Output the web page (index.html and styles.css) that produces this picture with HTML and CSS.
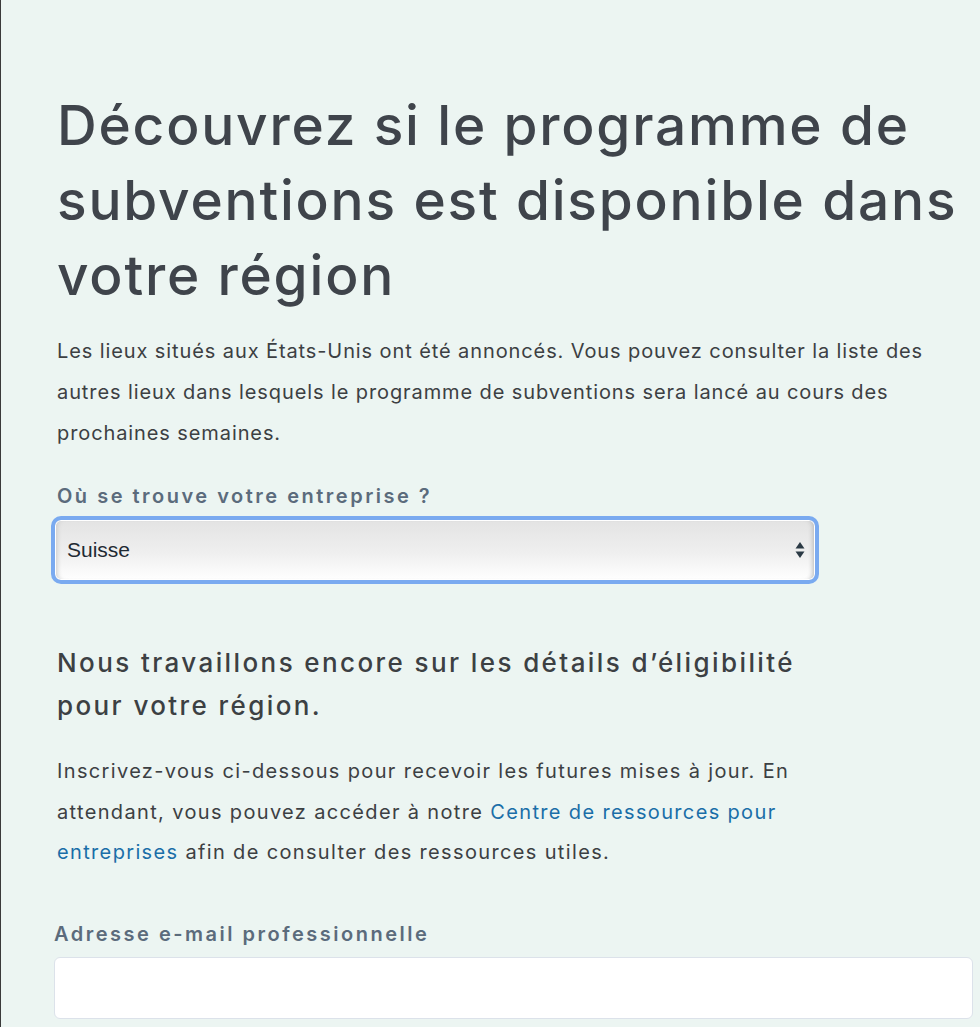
FILE: index.html
```html
<!DOCTYPE html>
<html lang="fr">
<head>
<meta charset="utf-8">
<link rel="stylesheet" href="styles.css">
</head>
<body>
<main class="page">
  <h1 class="title">Découvrez si le programme de subventions est disponible dans votre région</h1>
  <p class="intro">Les lieux situés aux États-Unis ont été annoncés. Vous pouvez consulter la liste des autres lieux dans lesquels le programme de subventions sera lancé au cours des prochaines semaines.</p>
  <label class="label" for="country">Où se trouve votre entreprise ?</label>
  <div class="select" id="country">
    <span class="select-value">Suisse</span>
    <svg class="select-arrows" width="10" height="18" viewBox="0 0 10 18"><path d="M5 1 L9.5 7.5 H0.5 Z" fill="#2b3a45"/><path d="M5 17 L9.5 10.5 H0.5 Z" fill="#2b3a45"/></svg>
  </div>
  <h2 class="subtitle">Nous travaillons encore sur les détails d’éligibilité pour votre région.</h2>
  <p class="body">Inscrivez-vous ci-dessous pour recevoir les futures mises à jour. En attendant, vous pouvez accéder à notre <a href="#" class="link">Centre de ressources pour entreprises</a> afin de consulter des ressources utiles.</p>
  <label class="label label-email" for="email">Adresse e-mail professionnelle</label>
  <div class="input" id="email"></div>
</main>
</body>
</html>
```

FILE: styles.css
```css
html, body {
  margin: 0;
  padding: 0;
}
body {
  background: #ecf5f2;
  border-left: 1px solid #3a3a3a;
  min-height: 1027px;
  box-sizing: border-box;
  font-family: "Inter", "Open Sans", sans-serif;
  color: #3c4043;
}
.page {
  padding: 88px 0 0 56px;
  display: flex;
  flex-direction: column;
  align-items: flex-start;
}
.title {
  margin: 0;
  font-weight: 500;
  font-size: 55px;
  line-height: 75px;
  letter-spacing: 1.8px;
  color: #3f444b;
}
.intro {
  margin: 18px 0 0;
  font-size: 20px;
  line-height: 41px;
  letter-spacing: 0.9px;
  max-width: 918px;
  color: #3c4043;
}
.label {
  margin-top: 29px;
  font-size: 20px;
  font-weight: 600;
  line-height: 26px;
  letter-spacing: 2.5px;
  color: #5b6b7c;
}
.select {
  margin: 7px 0 0 -6px;
  width: 768px;
  height: 68px;
  box-sizing: border-box;
  border: 4px solid #7aaaf0;
  border-radius: 10px;
  background: linear-gradient(#e3e3e3, #efefef 55%, #ffffff);
  box-shadow: inset 0 0 0 1px #fff, inset -5px 0 5px -3px #b5b5b5, inset 5px 0 5px -3px #c8c8c8;
  display: flex;
  align-items: center;
  justify-content: space-between;
  padding: 0 10px 0 12px;
}
.select-value {
  font-family: "Liberation Sans", Arial, sans-serif;
  font-size: 21px;
  color: #1f2a33;
}
.subtitle {
  margin: 57px 0 0;
  max-width: 760px;
  font-size: 26px;
  font-weight: 500;
  line-height: 43px;
  letter-spacing: 2.4px;
  color: #3c4043;
}
.body {
  margin: 24px 0 0;
  max-width: 760px;
  font-size: 20px;
  line-height: 40.5px;
  letter-spacing: 1.35px;
  color: #3c4043;
}
.link {
  color: #1a6ea8;
  text-decoration: none;
}
.label-email {
  margin-top: 48px;
  margin-left: -3px;
}
.input {
  margin: 10px 0 0 -3px;
  width: 919px;
  height: 62px;
  box-sizing: border-box;
  background: #fff;
  border: 1px solid #dce2ea;
  border-radius: 6px;
}
```
